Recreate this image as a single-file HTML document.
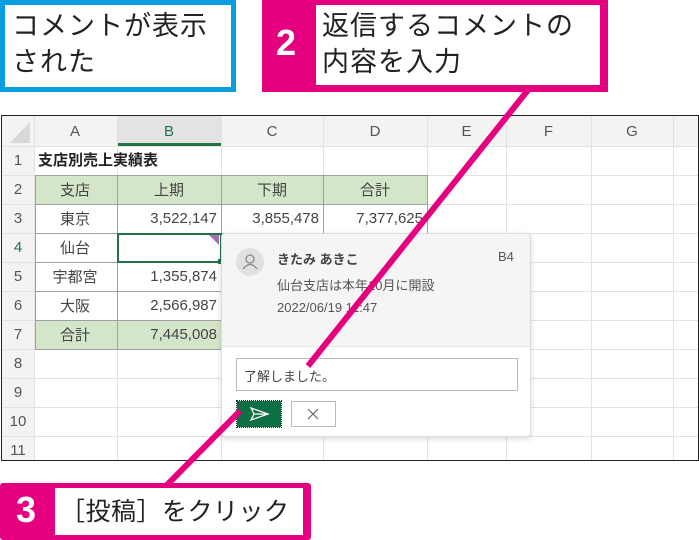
<!DOCTYPE html><html><head><meta charset="utf-8"><style>
*{margin:0;padding:0;box-sizing:border-box}
body{width:699px;height:540px;background:#fff;position:relative;overflow:hidden;font-family:"Liberation Sans","Noto Sans CJK JP",sans-serif;color:#333}
.a{position:absolute}
.c{position:absolute;font-size:15px;color:#444;display:flex;align-items:center;justify-content:center}
.r{justify-content:flex-end;padding-right:4px}
.big{font-size:27px;color:#222;line-height:36px;letter-spacing:1px;white-space:nowrap}
</style></head><body>
<div class="a" style="left:0;top:0;width:236px;height:92px;border:5px solid #0a9ee0;background:#fff"></div>
<div class="a big" style="left:12px;top:8px">コメントが表示<br>された</div>
<div class="a" style="left:262px;top:0;width:346px;height:92px;background:#e5007f"></div>
<div class="a" style="left:316px;top:5px;width:284px;height:80px;background:#fff"></div>
<div class="a" style="left:276px;top:22px;color:#fff;font-size:36px;font-weight:bold">2</div>
<div class="a big" style="left:322px;top:8px">返信するコメントの<br>内容を入力</div>

<div class="a" style="left:1px;top:115px;width:698px;height:346px;border:1px solid #222;background:#fff;overflow:hidden">
<svg class="a" style="left:0;top:0" width="698" height="346">
<rect x="0" y="0" width="698" height="30" fill="#f3f3f3"/>
<rect x="0" y="0" width="32" height="346" fill="#f3f3f3"/>
<rect x="115" y="0" width="104" height="30" fill="#e3e3e3"/>
<rect x="115" y="27" width="104" height="3" fill="#217346"/>
<polygon points="28,6 28,27 8,27" fill="#d8d8d8"/>
<g stroke="#e2e2e2" stroke-width="1">
<line x1="0" y1="30.5" x2="698" y2="30.5"/>
<line x1="0" y1="59.5" x2="698" y2="59.5"/><line x1="0" y1="88.5" x2="698" y2="88.5"/><line x1="0" y1="117.5" x2="698" y2="117.5"/><line x1="0" y1="146.5" x2="698" y2="146.5"/><line x1="0" y1="175.5" x2="698" y2="175.5"/><line x1="0" y1="204.5" x2="698" y2="204.5"/><line x1="0" y1="233.5" x2="698" y2="233.5"/><line x1="0" y1="262.5" x2="698" y2="262.5"/><line x1="0" y1="291.5" x2="698" y2="291.5"/><line x1="0" y1="320.5" x2="698" y2="320.5"/>
<line x1="32.5" y1="0" x2="32.5" y2="346"/><line x1="115.5" y1="0" x2="115.5" y2="346"/><line x1="219.5" y1="0" x2="219.5" y2="346"/><line x1="321.5" y1="0" x2="321.5" y2="346"/><line x1="425.5" y1="0" x2="425.5" y2="346"/><line x1="504.5" y1="0" x2="504.5" y2="346"/><line x1="589.5" y1="0" x2="589.5" y2="346"/><line x1="671.5" y1="0" x2="671.5" y2="346"/>
</g>
<rect x="33" y="60" width="392" height="29" fill="#d3e6c9"/>
<rect x="33" y="205" width="186" height="29" fill="#d3e6c9"/>
<g stroke="#a0a0a0" stroke-width="1" fill="none">
<rect x="33.5" y="59.5" width="392" height="58"/>
<line x1="33" y1="88.5" x2="425" y2="88.5"/>
<line x1="115.5" y1="59" x2="115.5" y2="234"/><line x1="219.5" y1="59" x2="219.5" y2="234"/><line x1="321.5" y1="59" x2="321.5" y2="118"/>
<rect x="33.5" y="117.5" width="186" height="116"/>
<line x1="33" y1="146.5" x2="219" y2="146.5"/><line x1="33" y1="175.5" x2="219" y2="175.5"/><line x1="33" y1="204.5" x2="219" y2="204.5"/>
</g>
<rect x="116" y="118" width="103" height="28" fill="#fff" stroke="#217346" stroke-width="2"/>
<rect x="216" y="143" width="5" height="5" fill="#217346"/>
<polygon points="207,119 217,119 217,129" fill="#a070b0"/>
</svg>
</div>
<div class="c" style="left:34px;top:116px;width:82px;height:30px;color:#555">A</div>
<div class="c" style="left:117px;top:116px;width:104px;height:30px;color:#217346">B</div>
<div class="c" style="left:221px;top:116px;width:102px;height:30px;color:#555">C</div>
<div class="c" style="left:323px;top:116px;width:104px;height:30px;color:#555">D</div>
<div class="c" style="left:427px;top:116px;width:79px;height:30px;color:#555">E</div>
<div class="c" style="left:506px;top:116px;width:85px;height:30px;color:#555">F</div>
<div class="c" style="left:591px;top:116px;width:82px;height:30px;color:#555">G</div>
<div class="a" style="left:2px;top:146px;width:32px;font-size:15px;color:#555;text-align:center;line-height:29px">1<br>2<br>3<br><span style="color:#217346">4</span><br>5<br>6<br>7<br>8<br>9<br>10<br>11</div>
<div class="a" style="left:38px;top:146px;line-height:29px;font-size:15px;font-weight:bold;color:#222">支店別売上実績表</div>
<div class="c" style="left:34px;top:175px;width:82px;height:29px">支店</div>
<div class="c" style="left:117px;top:175px;width:104px;height:29px">上期</div>
<div class="c" style="left:221px;top:175px;width:102px;height:29px">下期</div>
<div class="c" style="left:323px;top:175px;width:104px;height:29px">合計</div>
<div class="c" style="left:34px;top:204px;width:82px;height:29px">東京</div>
<div class="c r" style="left:117px;top:204px;width:104px;height:29px">3,522,147</div>
<div class="c r" style="left:221px;top:204px;width:102px;height:29px">3,855,478</div>
<div class="c r" style="left:323px;top:204px;width:104px;height:29px">7,377,625</div>
<div class="c" style="left:34px;top:233px;width:82px;height:29px">仙台</div>
<div class="c" style="left:34px;top:262px;width:82px;height:29px">宇都宮</div>
<div class="c r" style="left:117px;top:262px;width:104px;height:29px">1,355,874</div>
<div class="c" style="left:34px;top:291px;width:82px;height:29px">大阪</div>
<div class="c r" style="left:117px;top:291px;width:104px;height:29px">2,566,987</div>
<div class="c" style="left:34px;top:320px;width:82px;height:29px">合計</div>
<div class="c r" style="left:117px;top:320px;width:104px;height:29px">7,445,008</div>

<div class="a" style="left:221px;top:233px;width:310px;height:204px;background:#fff;border:1px solid #ddd;border-radius:4px;box-shadow:0 2px 6px rgba(0,0,0,.15);overflow:hidden">
<div class="a" style="left:0;top:0;width:310px;height:113px;background:#f5f5f5;border-bottom:1px solid #e6e6e6"></div>
<div class="a" style="left:14px;top:14px;width:28px;height:28px;border-radius:50%;background:#e1e1e1"></div>
<svg class="a" style="left:14px;top:14px" width="28" height="28"><circle cx="14" cy="11" r="4" fill="none" stroke="#888" stroke-width="1.3"/><path d="M7 21 q7 -9 14 0" fill="none" stroke="#888" stroke-width="1.3"/></svg>
<div class="a" style="left:55px;top:15px;font-size:13px;font-weight:bold;color:#444">きたみ あきこ</div>
<div class="a" style="left:276px;top:15px;font-size:13px;color:#555">B4</div>
<div class="a" style="left:55px;top:41px;font-size:13px;color:#555">仙台支店は本年10月に開設</div>
<div class="a" style="left:55px;top:66px;font-size:13px;color:#555">2022/06/19 11:47</div>
<div class="a" style="left:14px;top:124px;width:282px;height:33px;border:1px solid #bbb;background:#fff;font-size:13px;color:#444;padding:7px 7px">了解しました。</div>
<div class="a" style="left:15px;top:167px;width:44px;height:26px;background:#0e7042;outline:1px dotted #222"></div>
<svg class="a" style="left:15px;top:167px" width="44" height="26"><path d="M14 7 L31 13 L14 19 L17 13 Z M17 13 H31" fill="none" stroke="#fff" stroke-width="1.3"/></svg>
<div class="a" style="left:69px;top:167px;width:45px;height:26px;border:1px solid #bbb;background:#fff"></div>
<svg class="a" style="left:69px;top:167px" width="45" height="26"><path d="M17 8 L27 18 M27 8 L17 18" stroke="#666" stroke-width="1.2"/></svg>
</div>

<svg class="a" style="left:0;top:0" width="699" height="540"><g stroke="#e5007f" stroke-width="6" stroke-linecap="butt"><line x1="528" y1="90" x2="308" y2="366"/><line x1="240" y1="411" x2="166" y2="486"/></g></svg>

<div class="a" style="left:0;top:483px;width:311px;height:57px;background:#e5007f;border-radius:3px"></div>
<div class="a" style="left:55px;top:488px;width:248px;height:47px;background:#fff"></div>
<div class="a" style="left:16px;top:489px;color:#fff;font-size:36px;font-weight:bold">3</div>
<div class="a big" style="left:60px;top:494px;font-size:25px;letter-spacing:0.5px">［投稿］をクリック</div>
</body></html>
